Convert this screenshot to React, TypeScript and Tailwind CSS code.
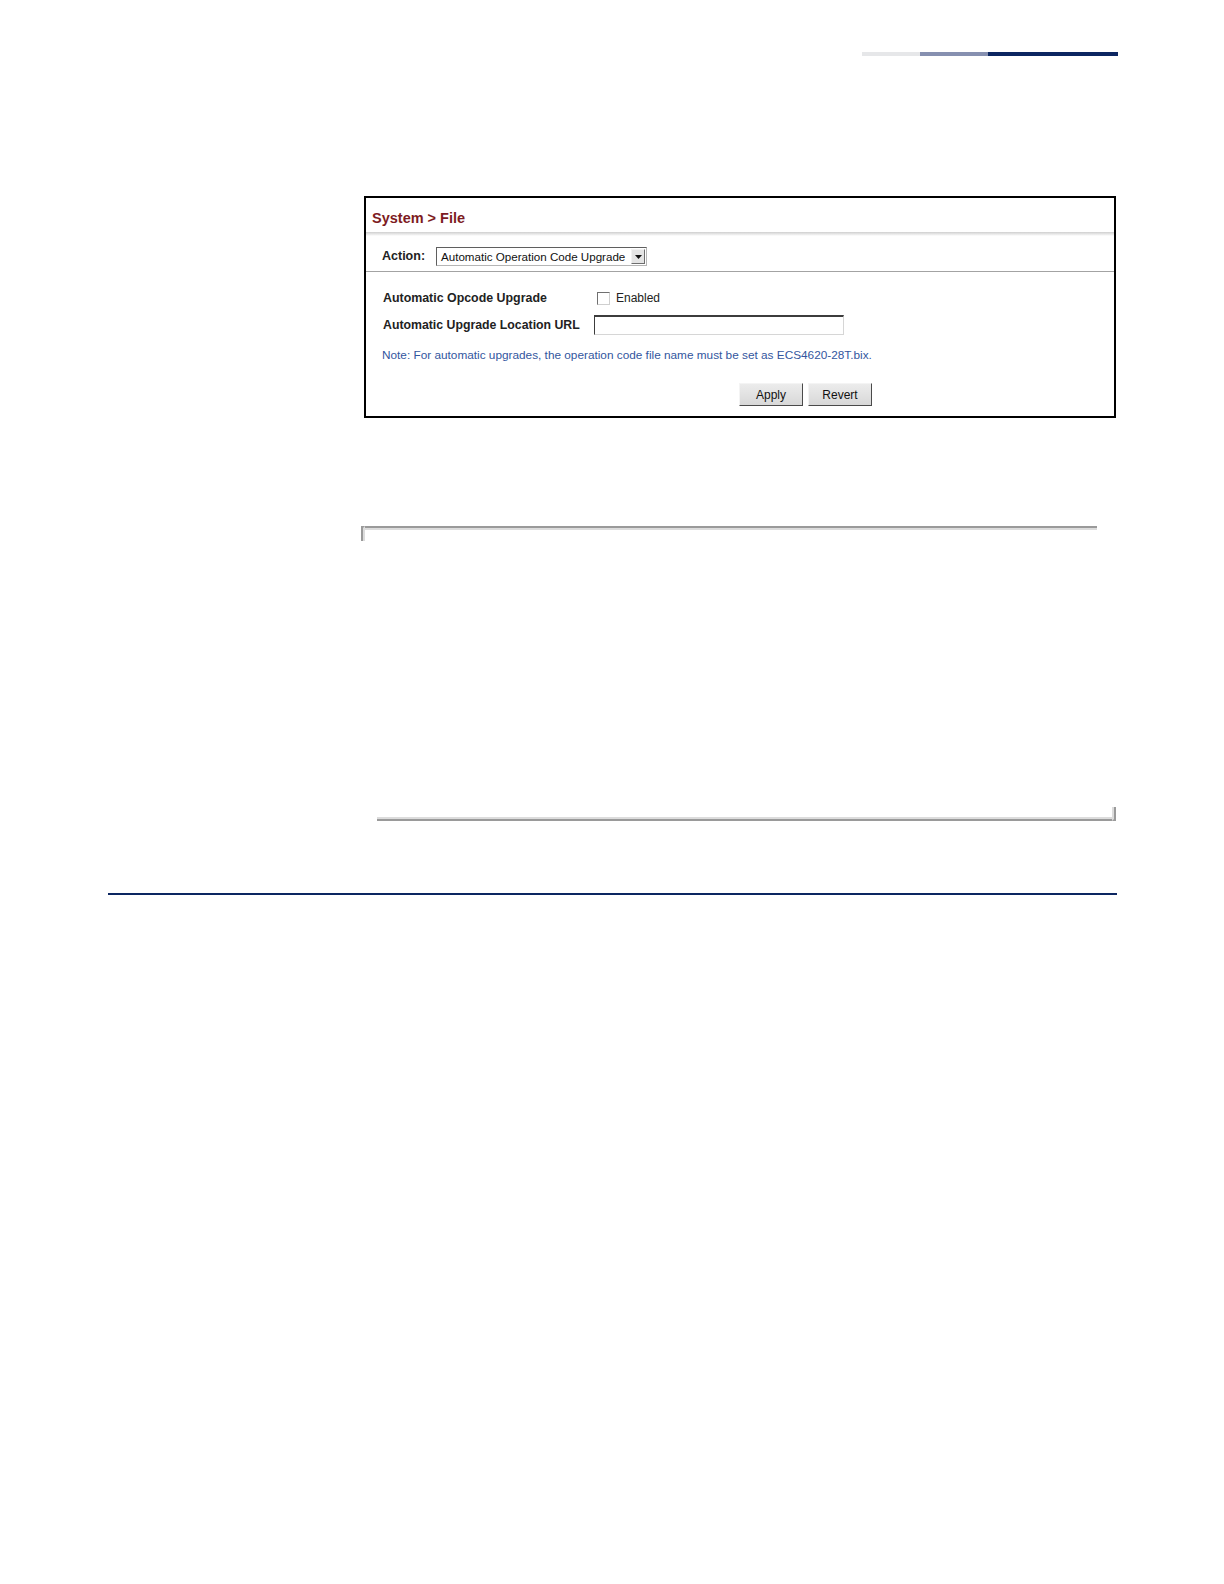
export default function App() {
  return (
    <div className="w-[1224px] h-[1584px] bg-white font-['Liberation_Sans',Arial,sans-serif] text-[#222]">
      {/* page header rule */}
      <div className="flex justify-end pr-[106px] pt-[52px]">
        <div className="h-[4px] w-[58px] bg-[#e6e7e9]" />
        <div className="h-[4px] w-[68px] bg-[#8690b0]" />
        <div className="h-[4px] w-[130px] bg-[#0c2661]" />
      </div>

      {/* screenshot: System > File */}
      <div className="ml-[364px] mt-[140px] w-[752px] border-2 border-black bg-white">
        <div className="h-[34px] pl-[6px] pt-[12px]">
          <h1 className="text-[14.5px] leading-[17px] font-bold text-[#7d1b22]">System &gt; File</h1>
        </div>
        <div className="h-[4px] bg-gradient-to-b from-[#cfcfcf] to-white" />

        <div className="flex h-[36px] items-center border-b border-[#a3a3a3] pl-[16px] pt-[6px]">
          <span className="w-[54px] text-[12.5px] font-bold">Action:</span>
          <div className="flex h-[19px] w-[211px] items-center border border-t-[#5f5f5f] border-l-[#5f5f5f] border-r-[#b5b5b5] border-b-[#b5b5b5] bg-white">
            <span className="min-w-0 flex-1 overflow-hidden whitespace-nowrap pl-[4px] text-[11.6px] leading-[15px] text-[#111]">Automatic Operation Code Upgrade</span>
            <span className="mr-[1px] flex h-[15px] w-[14px] shrink-0 items-center justify-center border border-t-[#f2f2f2] border-l-[#f2f2f2] border-r-[#6e6e6e] border-b-[#6e6e6e] bg-[#e4e4e4]">
              <svg width="7" height="4" viewBox="0 0 7 4">
                <path d="M0 0 H7 L3.5 4 Z" fill="#111" />
              </svg>
            </span>
          </div>
        </div>

        <div className="pl-[17px] pt-[16px] pr-[10px] pb-[10px]">
          <div className="flex h-[20px] items-center">
            <span className="w-[214px] text-[12.4px] font-bold">Automatic Opcode Upgrade</span>
            <span className="h-[13px] w-[13px] border border-t-[#707070] border-l-[#707070] border-r-[#cfcfcf] border-b-[#cfcfcf] bg-white" />
            <span className="ml-[6px] text-[12px] text-[#222]">Enabled</span>
          </div>
          <div className="mt-[7px] flex h-[20px] items-center">
            <span className="w-[211px] text-[12.3px] font-bold">Automatic Upgrade Location URL</span>
            <div className="h-[20px] w-[250px] border border-t-2 border-t-[#3c3c3c] border-l-[#3c3c3c] border-r-[#d6d6d6] border-b-[#d6d6d6] bg-white" />
          </div>
          <p className="mt-[13px] -ml-[1px] text-[11.8px] leading-[14px] text-[#33569e]">
            Note: For automatic upgrades, the operation code file name must be set as ECS4620-28T.bix.
          </p>
          <div className="mt-[21px] flex gap-[5px] pl-[356px]">
            <button className="h-[23px] w-[64px] border border-t-[#f4f4f4] border-l-[#f4f4f4] border-r-[#4a4a4a] border-b-[#4a4a4a] bg-gradient-to-b from-[#ececec] to-[#d8d8d8] text-[12px] text-[#111]">
              Apply
            </button>
            <button className="h-[23px] w-[64px] border border-t-[#f4f4f4] border-l-[#f4f4f4] border-r-[#4a4a4a] border-b-[#4a4a4a] bg-gradient-to-b from-[#ececec] to-[#d8d8d8] text-[12px] text-[#111]">
              Revert
            </button>
          </div>
        </div>
      </div>

      {/* second (empty) screenshot frame */}
      <div className="ml-[361px] mt-[108px] w-[755px]">
        <div className="mr-[19px] flex items-start">
          <div className="h-[15px] w-[4px] border-l-2 border-l-[#9a9a9a] border-r-2 border-r-[#dcdcdc] border-t-2 border-t-[#9a9a9a]" />
          <div className="h-[4px] flex-1 border-t-2 border-t-[#9a9a9a] border-b-2 border-b-[#dcdcdc]" />
        </div>
        <div className="h-[266px]" />
        <div className="ml-[16px] flex items-end">
          <div className="h-[4px] flex-1 border-t-2 border-t-[#dcdcdc] border-b-2 border-b-[#9a9a9a]" />
          <div className="h-[14px] w-[4px] border-l-2 border-l-[#dcdcdc] border-r-2 border-r-[#9a9a9a] border-b-2 border-b-[#9a9a9a]" />
        </div>
      </div>

      {/* section rule */}
      <div className="ml-[108px] mt-[72px] h-[2px] w-[1009px] bg-[#0c2661]" />
    </div>
  );
}
